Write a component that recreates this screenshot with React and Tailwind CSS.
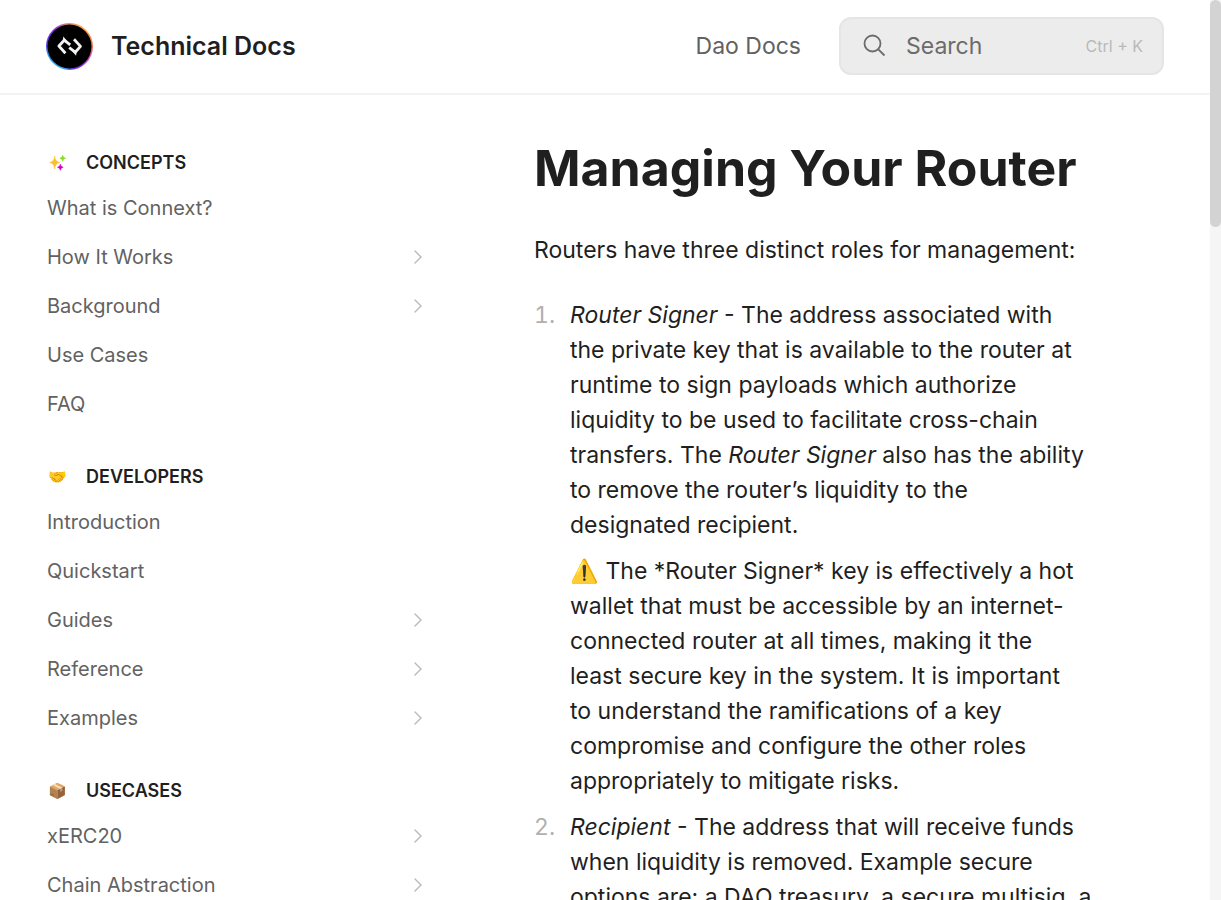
import React from "react";

function Sparkles() {
  return (
    <svg viewBox="0 1 20 24" className="h-6 w-5" aria-hidden="true">
      <path d="M7.7 6Q8.2 11.8 12.7 12.5Q8.2 13.2 7.7 19Q7.2 13.2 2.7 12.5Q7.2 11.8 7.7 6Z" fill="#fbc02d" stroke="#fbc02d" strokeWidth="0.5" />
      <path d="M15.7 5.2Q16 8 18.6 8.3Q16 8.6 15.7 11.4Q15.4 8.6 12.8 8.3Q15.4 8 15.7 5.2Z" fill="#8bdb1e" stroke="#8bdb1e" strokeWidth="0.5" />
      <path d="M13.3 14.2Q13.6 17 16.2 17.3Q13.6 17.6 13.3 20.4Q13 17.6 10.4 17.3Q13 17 13.3 14.2Z" fill="#d500c8" stroke="#d500c8" strokeWidth="0.5" />
    </svg>
  );
}

const sections = [
  {
    title: "Concepts",
    icon: <Sparkles />,
    items: [
      { label: "What is Connext?" },
      { label: "How It Works", nested: true },
      { label: "Background", nested: true },
      { label: "Use Cases" },
      { label: "FAQ" },
    ],
  },
  {
    title: "Developers",
    icon: "🤝",
    items: [
      { label: "Introduction" },
      { label: "Quickstart" },
      { label: "Guides", nested: true },
      { label: "Reference", nested: true },
      { label: "Examples", nested: true },
    ],
  },
  {
    title: "Usecases",
    icon: "📦",
    items: [
      { label: "xERC20", nested: true },
      { label: "Chain Abstraction", nested: true },
    ],
  },
];

function Logo() {
  return (
    <span className="flex size-[47px] items-center justify-center rounded-full bg-[conic-gradient(from_0deg,#e89060,#ffa040_45deg,#f07050_90deg,#d050c0_120deg,#8030f0_150deg,#7a2cf0_165deg,#30b0f0_200deg,#3090f0_250deg,#5a30e8_280deg,#9030e0_320deg,#e89060)]">
      <svg viewBox="0 0 47 47" className="size-full" aria-hidden="true">
        <circle cx="23.5" cy="23.5" r="22" fill="#000" />
        <g fill="none" stroke="#f2f2f2" strokeWidth="2.8" strokeLinejoin="round">
          <path d="M19.4 30.2L12.9 23L18.2 17.2L24.2 21.8" />
          <path d="M28 16.2L34.5 23.4L29.2 29.2L23.2 24.6" />
        </g>
        <path d="M17.3 13.6L21.6 18.6L16.6 19Z" fill="#f2f2f2" />
        <path d="M30.1 32.8L25.8 27.8L30.8 27.4Z" fill="#f2f2f2" />
      </svg>
    </span>
  );
}

function Chevron() {
  return (
    <svg viewBox="0 0 8 14" className="mr-0.5 h-[14px] w-2 flex-none" fill="none" stroke="#b9b9b9" strokeWidth="1.4" strokeLinecap="round" aria-hidden="true">
      <path d="M1 1L7 7L1 13" />
    </svg>
  );
}

function Header() {
  return (
    <header className="flex h-[95px] flex-none items-center justify-between border-b-2 border-[#f3f3f3] px-[46px] pb-px">
      <a href="#home" className="flex items-center gap-[18px]">
        <Logo />
        <span className="text-[25px] leading-[36px] font-semibold text-[#1f1f1f]">Technical Docs</span>
      </a>
      <div className="flex items-center gap-[38px]">
        <a href="#dao" className="text-[23px] leading-[35px] text-[#626262]">Dao Docs</a>
        <button type="button" className="flex h-[58px] w-[325px] items-center rounded-xl border-2 border-[#e5e5e5] bg-[#ececec] pr-[19px] pl-[22px] text-left text-[#6b6b6b]">
          <svg viewBox="0 0 24 24" className="size-6 flex-none" fill="none" stroke="currentColor" strokeWidth="1.8" aria-hidden="true">
            <circle cx="9.5" cy="9.5" r="8" />
            <path d="M15.3 15.3L21.5 21.5" />
          </svg>
          <span className="ml-[19px] flex-1 text-[23px] leading-[35px]">Search</span>
          <kbd className="font-['Inter',sans-serif] text-[16px] leading-6 text-[#b9b9b9]">Ctrl + K</kbd>
        </button>
      </div>
    </header>
  );
}

function Sidebar() {
  return (
    <nav className="flex w-[377px] flex-none flex-col gap-[37px] pt-14">
      {sections.map((section) => (
        <section key={section.title}>
          <h2 className="flex h-6 items-center gap-[19px] text-[18px] leading-6 font-semibold text-[#1f1f1f] uppercase">
            <span className="flex w-5 justify-center text-[15px]">{section.icon}</span>
            {section.title}
          </h2>
          <ul className="mt-2">
            {section.items.map((item) => (
              <li key={item.label}>
                <a href="#page" className="flex h-[49px] items-center justify-between text-[20px] leading-7 text-[#626262]">
                  {item.label}
                  {item.nested && <Chevron />}
                </a>
              </li>
            ))}
          </ul>
        </section>
      ))}
    </nav>
  );
}

function Article() {
  return (
    <main className="min-w-0 flex-1 pt-[43px] pr-[116px] text-[23px] leading-[35px] text-[#1f1f1f]">
      <h1 className="text-[50px] leading-[60px] font-bold">Managing Your Router</h1>
      <p className="mt-[35px]">Routers have three distinct roles for management:</p>
      <ol className="mt-[30px] flex flex-col gap-[11px]">
        <li className="flex">
          <span className="w-9 flex-none text-[#b0b0b0] tabular-nums">1.</span>
          <div className="flex flex-col gap-[11px]">
            <p>
              <em>Router Signer</em> - The address associated with the&nbsp;private key that is available to the router
              at runtime to sign payloads which authorize liquidity to be used to facilitate cross-chain transfers.
              The <em>Router Signer</em> also has the ability to remove the router’s liquidity to the
              designated&nbsp;recipient.
            </p>
            <p>
              ⚠️ The *Router Signer* key is effectively a hot wallet that must be accessible by an internet-connected
              router at all times, making it the least&nbsp;secure key in the system. It is important
              to&nbsp;understand the ramifications of a key compromise and configure the other roles appropriately to
              mitigate risks.
            </p>
          </div>
        </li>
        <li className="flex">
          <span className="w-9 flex-none text-[#b0b0b0] tabular-nums">2.</span>
          <p>
            <em>Recipient</em> - The address that will receive funds when liquidity is removed. Example secure options
            are: a DAO treasury, a secure multisig, a
          </p>
        </li>
      </ol>
    </main>
  );
}

export default function App() {
  return (
    <div className="flex h-screen overflow-hidden bg-white font-['Inter',sans-serif]">
      <div className="flex min-w-0 flex-1 flex-col">
        <Header />
        <div className="flex min-h-0 flex-1 gap-[110px] overflow-hidden pl-[47px]">
          <Sidebar />
          <Article />
        </div>
      </div>
      <div className="w-[11px] flex-none bg-[#f5f5f5]">
        <div className="h-[227px] rounded-full bg-[#d3d3d3]" />
      </div>
    </div>
  );
}
